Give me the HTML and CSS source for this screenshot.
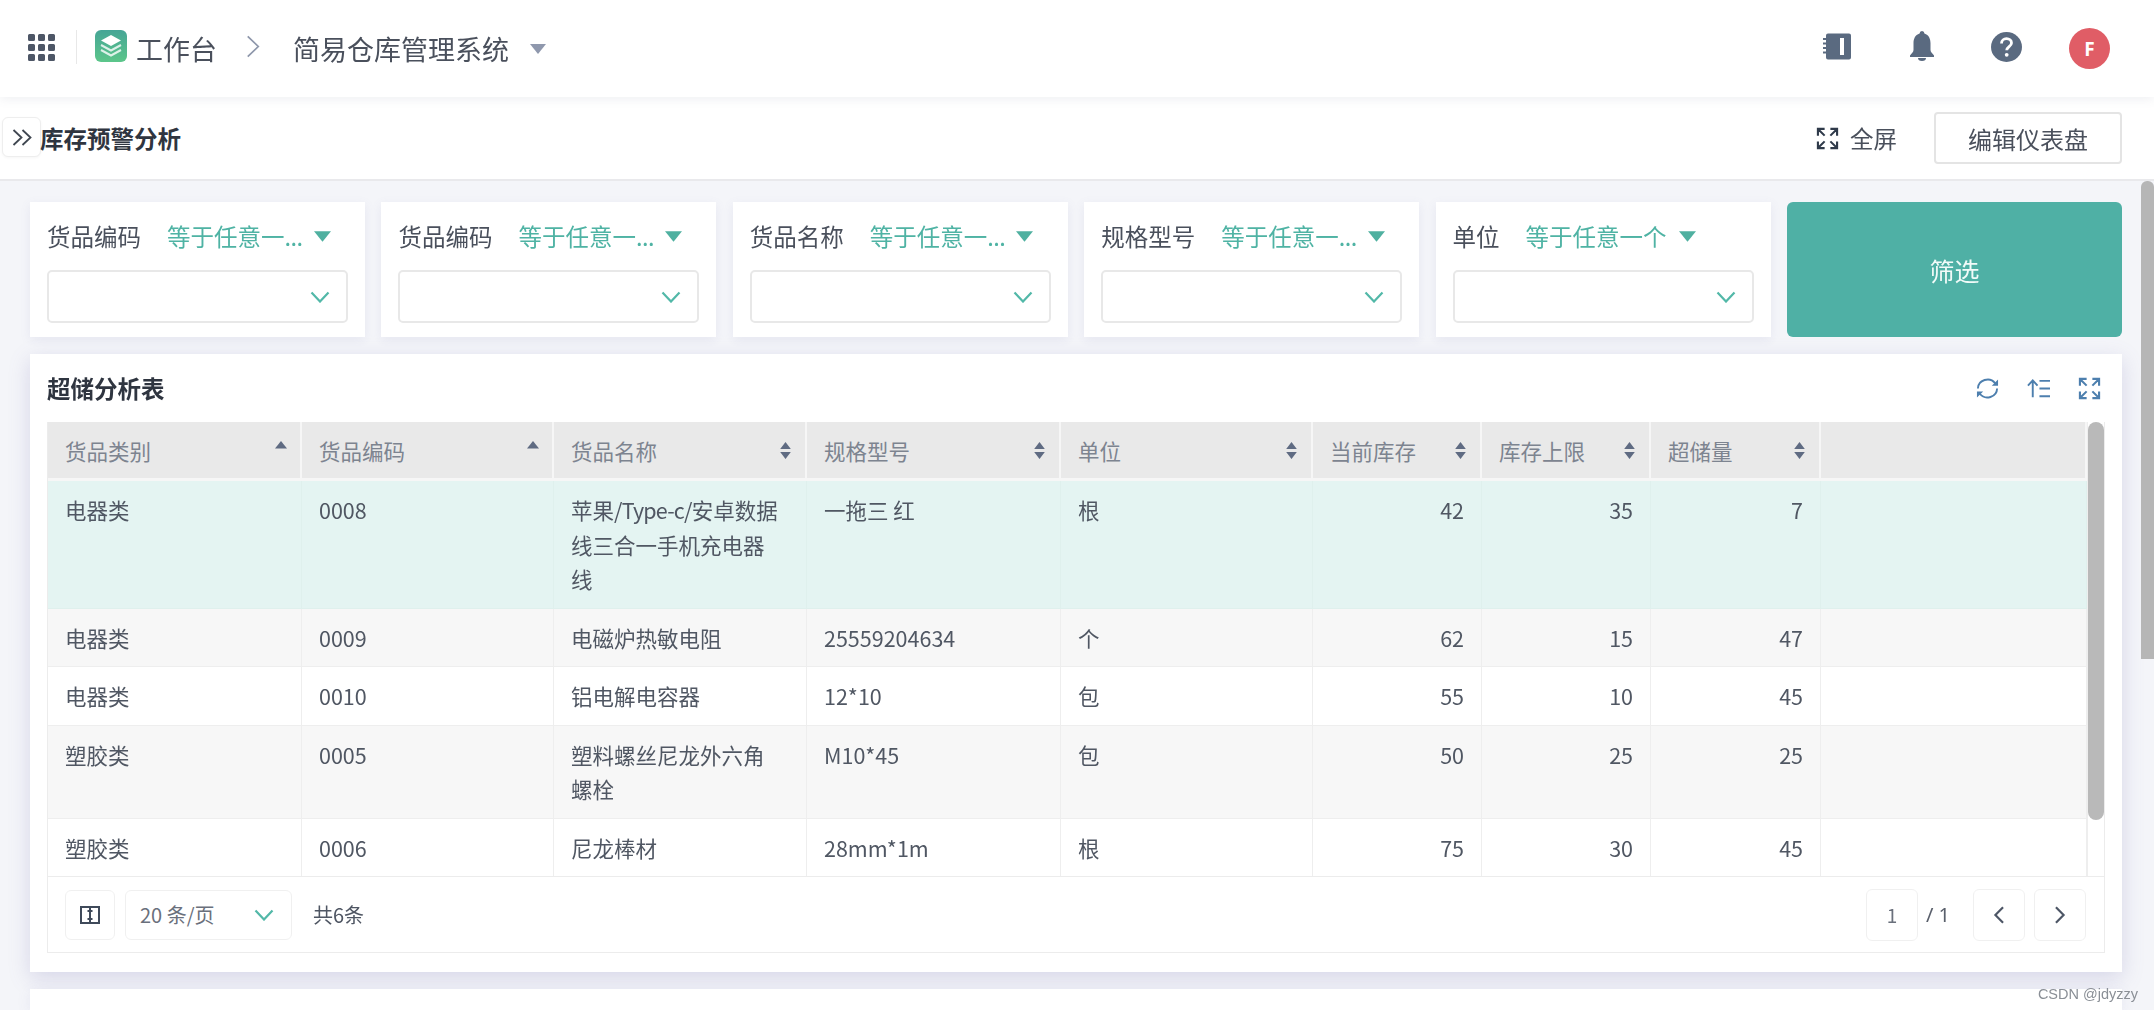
FILE: index.html
```html
<!DOCTYPE html>
<html lang="zh-CN">
<head>
<meta charset="utf-8">
<title>库存预警分析</title>
<link rel="stylesheet" href="styles.css">
</head>
<body>
<svg class="sprite" aria-hidden="true">
  <defs>
    <linearGradient id="logo-g" x1="0" y1="0" x2="0" y2="1"><stop offset="0" stop-color="#46a596"/><stop offset="1" stop-color="#5cc68a"/></linearGradient>
    <symbol id="i-expand" viewBox="0 0 24 24"><path d="M9 2H2v7M2 2l7 7M15 2h7v7M22 2l-7 7M9 22H2v-7M2 22l7-7M15 22h7v-7M22 22l-7-7" fill="none" stroke="currentColor" stroke-width="2.2"/></symbol>
    <symbol id="i-caret" viewBox="0 0 16 10"><path d="M0 0h16L8 10z" fill="currentColor"/></symbol>
    <symbol id="i-chev" viewBox="0 0 20 12"><path d="M1.500 1.500 10 10.500l8.500-9" fill="none" stroke="currentColor" stroke-width="2.200"/></symbol>
    <symbol id="i-sort" viewBox="0 0 12 16"><path d="M6 0l5 6.500H1zM6 16l-5-6.500h10z" fill="currentColor"/></symbol>
    <symbol id="i-up" viewBox="0 0 12 8"><path d="M6 0l6 7.500H0z" fill="currentColor"/></symbol>
  </defs>
</svg>
<div class="app">
  <header class="topbar">
    <svg class="ic-grid" viewBox="0 0 27 27"><path d="M0 1.500A1.500 1.500 0 0 1 1.500 0h4A1.500 1.500 0 0 1 7 1.500v4A1.500 1.500 0 0 1 5.500 7h-4A1.500 1.500 0 0 1 0 5.500zM10 1.500A1.500 1.500 0 0 1 11.500 0h4A1.500 1.500 0 0 1 17 1.500v4A1.500 1.500 0 0 1 15.500 7h-4A1.500 1.500 0 0 1 10 5.500zM20 1.500A1.500 1.500 0 0 1 21.500 0h4A1.500 1.500 0 0 1 27 1.500v4A1.500 1.500 0 0 1 25.500 7h-4A1.500 1.500 0 0 1 20 5.500zM0 11.500A1.500 1.500 0 0 1 1.500 10h4A1.500 1.500 0 0 1 7 11.500v4A1.500 1.500 0 0 1 5.500 17h-4A1.500 1.500 0 0 1 0 15.500zM10 11.500A1.500 1.500 0 0 1 11.500 10h4A1.500 1.500 0 0 1 17 11.500v4A1.500 1.500 0 0 1 15.500 17h-4A1.500 1.500 0 0 1 10 15.500zM20 11.500A1.500 1.500 0 0 1 21.500 10h4A1.500 1.500 0 0 1 27 11.500v4A1.500 1.500 0 0 1 25.500 17h-4A1.500 1.500 0 0 1 20 15.500zM0 21.500A1.500 1.500 0 0 1 1.500 20h4A1.500 1.500 0 0 1 7 21.500v4A1.500 1.500 0 0 1 5.500 27h-4A1.500 1.500 0 0 1 0 25.500zM10 21.500A1.500 1.500 0 0 1 11.500 20h4A1.500 1.500 0 0 1 17 21.500v4A1.500 1.500 0 0 1 15.500 27h-4A1.500 1.500 0 0 1 10 25.500zM20 21.500A1.500 1.500 0 0 1 21.500 20h4A1.500 1.500 0 0 1 27 21.500v4A1.500 1.500 0 0 1 25.500 27h-4A1.500 1.500 0 0 1 20 25.500z" fill="#4d5666"/></svg>
    <span class="divider"></span>
    <svg class="ic-logo" viewBox="0 0 32 32"><rect width="32" height="32" rx="6" fill="url(#logo-g)"/><path d="M16 5l10 5.500L16 16 6 10.500z" fill="#fff"/><path d="M6 15l10 5.500L26 15M6 20l10 5.500L26 20" fill="none" stroke="#fff" stroke-width="2" opacity=".8"/></svg>
    <span class="crumb">工作台</span>
    <svg class="ic-crumb" viewBox="0 0 14 24"><path d="M1.500 1.500 12.500 12 1.500 22.500" fill="none" stroke="#8e97ab" stroke-width="1.800"/></svg>
    <span class="crumb system">简易仓库管理系统</span>
    <svg class="ic-syscaret"><use href="#i-caret"/></svg>
    <svg class="ic-book" viewBox="0 0 28 27"><path d="M3 2.500A2 2 0 0 1 5 .5h21a2 2 0 0 1 2 2v22a2 2 0 0 1-2 2H5a2 2 0 0 1-2-2z" fill="#5a6a80"/><path d="M0 6h4M0 10.500h4M0 15h4M0 19.500h4" stroke="#5a6a80" stroke-width="2"/><rect x="17" y="5" width="4" height="17" fill="#fff"/></svg>
    <svg class="ic-bell" viewBox="0 0 24 30"><path d="M12 0a2.500 2.500 0 0 1 2.400 2.500C19 4 20.500 8 20.500 12v7c0 2 2 3.500 3.500 5.500V26H0v-1.500C1.500 22.500 3.500 21 3.500 19v-7c0-4 1.500-8 6.100-9.500A2.500 2.500 0 0 1 12 0zM8 27h8a4 3 0 0 1-8 0z" fill="#5a6a80"/></svg>
    <svg class="ic-help" viewBox="0 0 31 30"><ellipse cx="15.500" cy="15" rx="15.500" ry="15" fill="#5a6a80"/><path d="M10.500 11.500c0-3 2.200-4.800 5-4.800s5 1.800 5 4.300c0 3.500-4.800 3.700-4.800 7.300" fill="none" stroke="#fff" stroke-width="2.800"/><circle cx="15.700" cy="22.800" r="1.900" fill="#fff"/></svg>
    <span class="avatar">F</span>
  </header>

  <div class="subbar">
    <button class="collapse" type="button"><svg viewBox="0 0 20 17"><path d="M1.500 1 9.500 8.500l-8 7.500M10.500 1l8 7.500-8 7.500" fill="none" stroke="#3f4650" stroke-width="1.800"/></svg></button>
    <h1 class="page-title">库存预警分析</h1>
    <svg class="ic-full"><use href="#i-expand"/></svg>
    <span class="full-text">全屏</span>
    <button class="edit-btn" type="button">编辑仪表盘</button>
  </div>

  <div class="workspace">
    <main class="content">
      <section class="filters">
        <div class="filter">
          <div class="filter-head"><span class="filter-label">货品编码</span><span class="filter-cond">等于任意一<span class="dots">...</span></span><svg class="ic-cond"><use href="#i-caret"/></svg></div>
          <div class="select"><svg class="ic-chev"><use href="#i-chev"/></svg></div>
        </div>
        <div class="filter">
          <div class="filter-head"><span class="filter-label">货品编码</span><span class="filter-cond">等于任意一<span class="dots">...</span></span><svg class="ic-cond"><use href="#i-caret"/></svg></div>
          <div class="select"><svg class="ic-chev"><use href="#i-chev"/></svg></div>
        </div>
        <div class="filter">
          <div class="filter-head"><span class="filter-label">货品名称</span><span class="filter-cond">等于任意一<span class="dots">...</span></span><svg class="ic-cond"><use href="#i-caret"/></svg></div>
          <div class="select"><svg class="ic-chev"><use href="#i-chev"/></svg></div>
        </div>
        <div class="filter">
          <div class="filter-head"><span class="filter-label">规格型号</span><span class="filter-cond">等于任意一<span class="dots">...</span></span><svg class="ic-cond"><use href="#i-caret"/></svg></div>
          <div class="select"><svg class="ic-chev"><use href="#i-chev"/></svg></div>
        </div>
        <div class="filter">
          <div class="filter-head"><span class="filter-label">单位</span><span class="filter-cond">等于任意一个</span><svg class="ic-cond"><use href="#i-caret"/></svg></div>
          <div class="select"><svg class="ic-chev"><use href="#i-chev"/></svg></div>
        </div>
        <button class="filter-btn" type="button">筛选</button>
      </section>

      <section class="card">
        <div class="card-head">
          <h2 class="card-title">超储分析表</h2>
          <svg class="ic-tool" viewBox="0 0 24 24"><path d="M2 12a10 9.500 0 0 1 18-5.500M22 12a10 9.500 0 0 1-18 5.500" fill="none" stroke="currentColor" stroke-width="2"/><path d="M23 2.500V9h-6.500zM1 21.500V15h6.500z" fill="currentColor"/></svg>
          <svg class="ic-tool" viewBox="0 0 24 24"><path d="M6 21V4M1 9l5-5.500L11 9M13 4h11M13 12h11M13 20h11" fill="none" stroke="currentColor" stroke-width="2"/></svg>
          <svg class="ic-tool"><use href="#i-expand"/></svg>
        </div>
        <div class="grid">
          <div class="grid-body">
            <table class="data">
              <colgroup><col class="w0"><col class="w2"><col class="w1"><col class="w3"><col class="w2"><col class="w4"><col class="w4"><col class="w5"><col class="w6"></colgroup>
              <thead>
                <tr>
                  <th><div class="th"><span>货品类别</span><svg class="ic-up"><use href="#i-up"/></svg></div></th>
                  <th><div class="th"><span>货品编码</span><svg class="ic-up"><use href="#i-up"/></svg></div></th>
                  <th><div class="th"><span>货品名称</span><svg class="ic-sort"><use href="#i-sort"/></svg></div></th>
                  <th><div class="th"><span>规格型号</span><svg class="ic-sort"><use href="#i-sort"/></svg></div></th>
                  <th><div class="th"><span>单位</span><svg class="ic-sort"><use href="#i-sort"/></svg></div></th>
                  <th><div class="th"><span>当前库存</span><svg class="ic-sort"><use href="#i-sort"/></svg></div></th>
                  <th><div class="th"><span>库存上限</span><svg class="ic-sort"><use href="#i-sort"/></svg></div></th>
                  <th><div class="th"><span>超储量</span><svg class="ic-sort"><use href="#i-sort"/></svg></div></th>
                  <th></th>
                </tr>
              </thead>
              <tbody>
                <tr class="selected"><td>电器类</td><td>0008</td><td class="long">苹果<span class="latin">/Type-c/</span>安卓数据<br>线三合一手机充电器<br>线</td><td>一拖三 红</td><td>根</td><td class="num">42</td><td class="num">35</td><td class="num">7</td><td></td></tr>
                <tr class="alt"><td>电器类</td><td>0009</td><td>电磁炉热敏电阻</td><td>25559204634</td><td>个</td><td class="num">62</td><td class="num">15</td><td class="num">47</td><td></td></tr>
                <tr><td>电器类</td><td>0010</td><td>铝电解电容器</td><td>12*10</td><td>包</td><td class="num">55</td><td class="num">10</td><td class="num">45</td><td></td></tr>
                <tr class="alt"><td>塑胶类</td><td>0005</td><td>塑料螺丝尼龙外六角螺栓</td><td>M10*45</td><td>包</td><td class="num">50</td><td class="num">25</td><td class="num">25</td><td></td></tr>
                <tr><td>塑胶类</td><td>0006</td><td>尼龙棒材</td><td>28mm*1m</td><td>根</td><td class="num">75</td><td class="num">30</td><td class="num">45</td><td></td></tr>
              </tbody>
            </table>
            <div class="rail"><div class="rail-thumb"></div></div>
          </div>
          <div class="pager">
            <button class="pg-btn" type="button"><svg class="ic-cols" viewBox="0 0 20 20"><path d="M1 2h18v16H1z" fill="none" stroke="#3f4a5a" stroke-width="2"/><path d="M10 2v16M7.500 6h5M7.500 14h5" stroke="#3f4a5a" stroke-width="2" fill="none"/></svg></button>
            <div class="pg-size"><span>20 条/页</span><svg class="ic-chev"><use href="#i-chev"/></svg></div>
            <span class="pg-total">共6条</span>
            <span class="pg-input">1</span>
            <span class="pg-of">/ 1</span>
            <button class="pg-nav" type="button"><svg viewBox="0 0 12 20"><path d="M10.500 1.500 2 10l8.500 8.500" fill="none" stroke="#4d5666" stroke-width="2.400"/></svg></button>
            <button class="pg-nav" type="button"><svg viewBox="0 0 12 20"><path d="M1.500 1.500 10 10l-8.500 8.500" fill="none" stroke="#4d5666" stroke-width="2.400"/></svg></button>
          </div>
        </div>
      </section>

      <section class="card-next"></section>
    </main>
    <div class="page-rail"><div class="page-thumb"></div></div>
  </div>
  <span class="watermark">CSDN @jdyzzy</span>
</div>
</body>
</html>
```
FILE: styles.css
```css
* { box-sizing: border-box; }
html, body { margin: 0; height: 100%; overflow: hidden; }
body {
  background: #f4f5f9;
  color: #4f5663;
  font-family: "Noto Sans CJK SC", "Noto Sans", sans-serif;
}
svg { display: block; flex: none; }
button { font-family: inherit; padding: 0; cursor: pointer; }
.sprite { width: 0; height: 0; overflow: hidden; }

.app {
  position: relative;
  width: 2154px;
  height: 1010px;
  display: flex;
  flex-direction: column;
  filter: blur(0.7px);
}

/* top bar */
.topbar {
  height: 97px;
  flex: none;
  display: flex;
  align-items: center;
  padding: 0 44px 0 28px;
  background: #fff;
  box-shadow: 0 2px 10px rgba(90, 100, 130, .1);
  position: relative;
  z-index: 2;
}
.ic-grid { width: 27px; height: 27px; margin-bottom: 3px; }
.divider { width: 1px; height: 34px; background: #e8e8e8; margin: 0 18px 3px 21px; }
.ic-logo { width: 32px; height: 32px; margin: 0 9px 5px 0; }
.crumb { font-size: 27px; line-height: 40px; color: #4a505c; white-space: nowrap; }
.ic-crumb { width: 14px; height: 23px; margin: 0 33px 4px 29px; }
.ic-syscaret { width: 16px; height: 10px; margin-left: 21px; color: #8f98ad; }
.ic-book { width: 28px; height: 27px; margin: 0 0 5px auto; }
.ic-bell { width: 24px; height: 30px; margin: 0 0 5px 59px; }
.ic-help { width: 31px; height: 30px; margin: 0 0 3px 57px; }
.avatar {
  width: 41px; height: 41px; margin-left: 47px;
  display: flex; align-items: center; justify-content: center;
  border-radius: 50%;
  background: #e05d66;
  color: #fff;
  font: 700 19px "Noto Sans", sans-serif;
}

/* sub header */
.subbar {
  height: 84px;
  flex: none;
  display: flex;
  align-items: center;
  padding: 0 32px 0 2px;
  background: #fff;
  border-bottom: 2px solid #e9e9ec;
}
.collapse {
  width: 39px; height: 40px;
  display: flex; align-items: center; justify-content: center;
  background: #fff;
  border: 1px solid #eeeeee;
  border-radius: 6px;
  margin-top: -2px;
  box-shadow: 0 1px 3px rgba(0, 0, 0, .04);
}
.collapse svg { width: 20px; height: 17px; }
.page-title { margin: 0 auto 0 -1px; font-size: 23.5px; line-height: 36px; font-weight: 700; color: #2f3540; }
.ic-full { width: 23px; height: 23px; color: #2f3a4a; margin-right: 11px; }
.full-text { font-size: 23.5px; line-height: 36px; color: #4a505c; }
.edit-btn {
  width: 188px; height: 52px;
  margin-left: 37px;
  background: #fff;
  border: 2px solid #e4e4e4;
  border-radius: 4px;
  font-size: 24px;
  color: #4a505c;
}

/* workspace */
.workspace { flex: 1; min-height: 0; display: flex; }
.content {
  flex: 1;
  min-width: 0;
  display: flex;
  flex-direction: column;
  padding: 21px 19px 0 30px;
}
.page-rail { width: 13px; flex: none; }
.page-thumb { height: 478px; background: #b6b6b6; border-radius: 6px 6px 0 0; }

/* filters */
.filters { display: grid; grid-template-columns: repeat(6, minmax(0, 1fr)); gap: 16.4px; height: 135px; flex: none; }
.filter {
  display: flex;
  flex-direction: column;
  min-width: 0;
  padding: 17px 17px 14px;
  background: #fff;
  box-shadow: 0 3px 10px rgba(110, 110, 170, .1);
}
.filter-head { height: 34px; display: flex; align-items: center; margin-bottom: 17px; font-size: 23.5px; }
.filter-label { flex: none; color: #4a505c; margin-right: 26px; white-space: nowrap; }
.filter-cond { flex: none; color: #4fb3a4; white-space: nowrap; }
.dots { display: inline-block; width: 17px; letter-spacing: -.5px; }
.ic-cond { width: 17px; height: 11px; margin-left: 12px; color: #4fb0a0; }
.select {
  height: 53px;
  display: flex;
  align-items: center;
  justify-content: flex-end;
  padding-right: 16px;
  border: 2px solid #e8e8e8;
  border-radius: 5px;
  background: #fff;
}
.ic-chev { width: 20px; height: 12px; color: #52b8a8; }
.filter-btn {
  border: 0;
  border-radius: 6px;
  background: #4fb0a5;
  color: #f2fbf9;
  font-size: 25px;
}

/* table card */
.card {
  flex: none;
  height: 618px;
  margin-top: 17px;
  padding: 0 17px;
  background: #fff;
  box-shadow: 0 6px 20px rgba(110, 105, 175, .22);
}
.card-head { height: 68px; display: flex; align-items: center; justify-content: flex-end; gap: 28px; padding-right: 4px; color: #4d7fae; }
.card-title { margin: 0 auto 0 0; font-size: 23.5px; line-height: 36px; font-weight: 700; color: #2f3540; }
.ic-tool { width: 23px; height: 23px; }

.grid { height: 531px; display: flex; flex-direction: column; border: 1px solid #ececec; border-top: 0; }
.grid-body { height: 454px; flex: none; display: flex; overflow: hidden; }
.data { width: 2039px; flex: none; table-layout: fixed; border-collapse: separate; border-spacing: 0; font-size: 21.5px; color: #505763; align-self: flex-start; }
.w0 { width: 254px; } .w1 { width: 253px; } .w2 { width: 252px; } .w3 { width: 254px; } .w4 { width: 169px; } .w5 { width: 170px; } .w6 { width: 266px; }
.data th {
  height: 59px;
  padding: 0 13px 0 17px;
  background: #e9e9e9;
  border-right: 2px solid #f6f6f6;
  border-bottom: 3px solid #f6f6f6;
  font-weight: 400;
  text-align: left;
  color: #7d8490;
}
.th { display: flex; align-items: center; justify-content: space-between; }
.ic-up { width: 12px; height: 8px; color: #5f6b82; margin-bottom: 10px; }
.ic-sort { width: 13px; height: 17px; color: #5f6b82; }
.data td {
  padding: 12px 22px 11px 17px;
  line-height: 34.5px;
  vertical-align: top;
  border-right: 1px solid #eeeeee;
  border-bottom: 1px solid #eeeeee;
  background: #fff;
}
.data .long { padding-right: 8px; white-space: nowrap; }
.latin { letter-spacing: -.8px; }
.data .num { text-align: right; padding-right: 17px; padding-left: 0; }
.data .alt td { background: #f7f7f7; }
.data .selected td { background: #e4f4f2; border-color: #dff0ed; }
.rail { flex: 1; border-left: 1px solid #eeeeee; }
.rail-thumb { height: 398px; background: #b9b9b9; border-radius: 8px; }

.pager { flex: 1; display: flex; align-items: center; padding: 0 18px 0 17px; border-top: 1px solid #ececec; }
.pg-btn, .pg-size, .pg-input, .pg-nav {
  display: flex; align-items: center; justify-content: center;
  background: #fff;
  border: 1.5px solid #f0f0f0;
  border-radius: 6px;
}
.pg-btn { width: 50px; height: 50px; }
.ic-cols { width: 20px; height: 20px; }
.pg-size { width: 167px; height: 50px; margin-left: 10px; justify-content: space-between; padding: 0 17px 0 14px; font-size: 20px; color: #6a707c; }
.pg-total { margin-left: 21px; font-size: 20px; color: #4f5663; margin-right: auto; }
.pg-input { width: 52px; height: 52px; font-size: 19px; color: #6a707c; }
.pg-of { margin: 0 23px 0 8px; font-size: 20px; font-family: "Noto Sans", sans-serif; color: #5a606c; white-space: pre; }
.pg-nav { width: 52px; height: 52px; }
.pg-nav + .pg-nav { margin-left: 9px; }
.pg-nav svg { width: 12px; height: 18px; }

.card-next { flex: 1; margin-top: 17px; background: #fff; box-shadow: 0 2px 14px rgba(110, 105, 175, .1); }

.watermark {
  position: absolute;
  right: 16px;
  bottom: 8px;
  font: 14.5px "Liberation Sans", sans-serif;
  color: #8a8f96;
}
```
